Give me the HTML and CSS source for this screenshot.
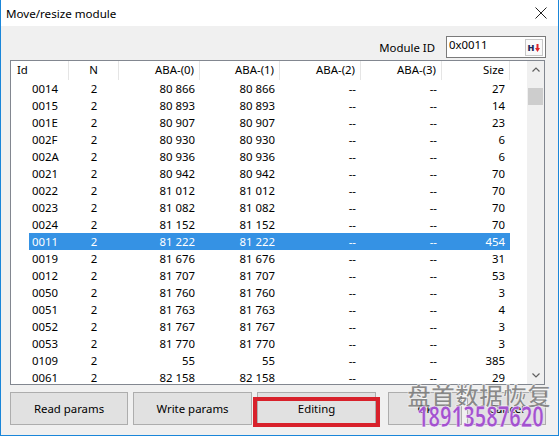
FILE: index.html
```html
<!DOCTYPE html>
<html lang="en">

<head>
    <meta charset="UTF-8">
    <title>Move/resize module</title>
    <link rel="stylesheet" href="styles.css">
</head>

<body>
    <div class="window">
        <div class="titlebar">
            <span class="title">Move/resize module</span>
            <svg class="close-icon" width="12" height="12" viewBox="0 0 12 12">
                <path d="M0.5 0.5 L11.5 11.5 M11.5 0.5 L0.5 11.5" stroke="#222" stroke-width="1" fill="none" />
            </svg>
        </div>

        <div class="toolbar">
            <label class="module-label">Module ID</label>
            <div class="module-input">
                <span class="module-value">0x0011</span>
                <span class="pick-btn">
                    <b>H</b>
                    <svg width="5" height="8" viewBox="0 0 5 8">
                        <path d="M1.5 0 H3.5 V4 H5 L2.5 8 L0 4 H1.5 Z" fill="#e0242a" />
                    </svg>
                </span>
            </div>
        </div>

        <div class="listview">
            <div class="list-main">
                <div class="list-header">
                    <div class="hcell h-id">Id</div>
                    <div class="hcell h-n">N</div>
                    <div class="hcell h-aba0">ABA-(0)</div>
                    <div class="hcell h-aba1">ABA-(1)</div>
                    <div class="hcell h-aba2">ABA-(2)</div>
                    <div class="hcell h-aba3">ABA-(3)</div>
                    <div class="hcell h-size">Size</div>
                    <div class="hcell h-fill"></div>
                </div>
                <div class="list-rows">
                    <div class="row"><span>0014</span><span>2</span><span>80 866</span><span>80 866</span><span>--</span><span>--</span><span>27</span></div>
                    <div class="row"><span>0015</span><span>2</span><span>80 893</span><span>80 893</span><span>--</span><span>--</span><span>14</span></div>
                    <div class="row"><span>001E</span><span>2</span><span>80 907</span><span>80 907</span><span>--</span><span>--</span><span>23</span></div>
                    <div class="row"><span>002F</span><span>2</span><span>80 930</span><span>80 930</span><span>--</span><span>--</span><span>6</span></div>
                    <div class="row"><span>002A</span><span>2</span><span>80 936</span><span>80 936</span><span>--</span><span>--</span><span>6</span></div>
                    <div class="row"><span>0021</span><span>2</span><span>80 942</span><span>80 942</span><span>--</span><span>--</span><span>70</span></div>
                    <div class="row"><span>0022</span><span>2</span><span>81 012</span><span>81 012</span><span>--</span><span>--</span><span>70</span></div>
                    <div class="row"><span>0023</span><span>2</span><span>81 082</span><span>81 082</span><span>--</span><span>--</span><span>70</span></div>
                    <div class="row"><span>0024</span><span>2</span><span>81 152</span><span>81 152</span><span>--</span><span>--</span><span>70</span></div>
                    <div class="row selected"><span>0011</span><span>2</span><span>81 222</span><span>81 222</span><span>--</span><span>--</span><span>454</span></div>
                    <div class="row"><span>0019</span><span>2</span><span>81 676</span><span>81 676</span><span>--</span><span>--</span><span>31</span></div>
                    <div class="row"><span>0012</span><span>2</span><span>81 707</span><span>81 707</span><span>--</span><span>--</span><span>53</span></div>
                    <div class="row"><span>0050</span><span>2</span><span>81 760</span><span>81 760</span><span>--</span><span>--</span><span>3</span></div>
                    <div class="row"><span>0051</span><span>2</span><span>81 763</span><span>81 763</span><span>--</span><span>--</span><span>4</span></div>
                    <div class="row"><span>0052</span><span>2</span><span>81 767</span><span>81 767</span><span>--</span><span>--</span><span>3</span></div>
                    <div class="row"><span>0053</span><span>2</span><span>81 770</span><span>81 770</span><span>--</span><span>--</span><span>3</span></div>
                    <div class="row"><span>0109</span><span>2</span><span>55</span><span>55</span><span>--</span><span>--</span><span>385</span></div>
                    <div class="row"><span>0061</span><span>2</span><span>82 158</span><span>82 158</span><span>--</span><span>--</span><span>29</span></div>
                </div>
            </div>
            <div class="scrollbar">
                <div class="sb-arrow">
                    <svg width="8" height="5" viewBox="0 0 8 5">
                        <path d="M0.5 4.5 L4 1 L7.5 4.5" stroke="#606060" stroke-width="1.2" fill="none" />
                    </svg>
                </div>
                <div class="sb-track">
                    <div class="sb-thumb"></div>
                </div>
                <div class="sb-arrow">
                    <svg width="8" height="5" viewBox="0 0 8 5">
                        <path d="M0.5 0.5 L4 4 L7.5 0.5" stroke="#606060" stroke-width="1.2" fill="none" />
                    </svg>
                </div>
            </div>
        </div>

        <div class="buttons">
            <button class="btn btn-read">Read params</button>
            <button class="btn btn-write">Write params</button>
            <button class="btn btn-edit">Editing</button>
            <button class="btn btn-ok">Ok</button>
            <button class="btn btn-cancel">Cancel</button>
        </div>

        <!-- annotation box round the Editing button -->
        <div class="mark-box"></div>

        <div class="watermark">
            <div class="wm-name">盘首数据恢复</div>
            <div class="wm-phone">18913587620</div>
        </div>
    </div>
</body>

</html>
```

FILE: styles.css
```css
* {
    box-sizing: border-box;
    margin: 0;
    padding: 0;
}

body {
    font-family: "Noto Sans", Arial, sans-serif;
    font-size: 11.4px;
    color: #000;
    background: #fff;
}

.window {
    position: relative;
    width: 559px;
    height: 436px;
    background-color: #f0f0f0;
    border: 1px solid #1a86d9;
    border-top: none;
    display: flex;
    flex-direction: column;
    overflow: hidden;
}

.titlebar {
    height: 26px;
    background-color: #fff;
    display: flex;
    align-items: center;
    justify-content: space-between;
    padding: 0 11px 0 5px;
}

.title {
    font-size: 11.6px;
}

.toolbar {
    height: 34px;
    display: flex;
    justify-content: flex-end;
    align-items: flex-start;
    padding: 10px 12px 0 0;
    gap: 11px;
}

.module-label {
    line-height: 22px;
    margin-top: 1px;
}

.module-input {
    width: 100px;
    height: 22px;
    background-color: #fff;
    border: 1px solid #7a7a7a;
    display: flex;
    justify-content: space-between;
    padding: 1px 2px 0 2px;
}

.module-value {
    line-height: 14px;
}

.pick-btn {
    width: 18px;
    height: 17px;
    margin-top: 1px;
    border: 1px solid #c8c8c8;
    background-color: #fafafa;
    display: flex;
    align-items: center;
    justify-content: center;
    gap: 1px;
}

.pick-btn b {
    font-size: 9px;
    font-weight: 900;
    color: #1d2a5c;
    line-height: 9px;
}

/* list view */

.listview {
    margin-left: 9px;
    width: 535px;
    height: 325px;
    background-color: #fff;
    border: 1px solid #828790;
    display: flex;
    overflow: hidden;
}

.list-main {
    width: 516px;
}

.list-header {
    display: grid;
    grid-template-columns: 58px 50px 81px 80px 81px 81px 68px 17px;
    height: 19px;
}

.hcell {
    border-right: 1px solid #e5e5e5;
    line-height: 17px;
    padding: 0 5px;
    text-align: right;
}

.h-id {
    text-align: left;
    padding-left: 6px;
}

.h-n {
    text-align: center;
}

.h-fill {
    border-right: none;
}

.row {
    display: grid;
    grid-template-columns: 40px 50px 81px 80px 81px 81px 68px;
    width: 481px;
    height: 17px;
    margin-left: 18px;
    line-height: 17px;
}

.row span {
    text-align: right;
    padding-right: 5px;
}

.row span:nth-child(1) {
    text-align: left;
    padding-left: 3px;
}

.row span:nth-child(2) {
    text-align: center;
    padding-right: 0;
}

.row.selected {
    background-color: #3592e4;
    color: #fff;
}

.scrollbar {
    width: 17px;
    background-color: #f0f0f0;
    display: flex;
    flex-direction: column;
}

.sb-arrow {
    height: 17px;
    display: flex;
    align-items: center;
    justify-content: center;
}

.sb-track {
    flex: 1;
    padding: 10px 1px 0 1px;
}

.sb-thumb {
    height: 17px;
    background-color: #cdcdcd;
}

/* buttons */

.buttons {
    display: flex;
    gap: 5px;
    margin-top: 7px;
    padding-left: 9px;
}

.btn {
    height: 33px;
    background-color: #e1e1e1;
    border: 1px solid #adadad;
    font-family: "Noto Sans", Arial, sans-serif;
    font-size: 11.4px;
    color: #000;
}

.btn-read {
    width: 118px;
}

.btn-write {
    width: 119px;
}

.btn-edit {
    width: 119px;
}

.btn-ok {
    width: 74px;
    margin-left: 7px;
}

.btn-cancel {
    width: 79px;
}

.mark-box {
    position: absolute;
    left: 252px;
    top: 397px;
    width: 127px;
    height: 30px;
    border: 4px solid #d8212b;
}

.watermark {
    position: absolute;
    left: 406px;
    top: 381px;
    pointer-events: none;
}

.wm-name {
    font-family: "Noto Sans CJK SC", sans-serif;
    font-size: 24px;
    font-weight: 700;
    line-height: 28px;
    color: rgba(120, 120, 120, 0.85);
    -webkit-text-stroke: 0.5px #fff;
}

.wm-phone {
    font-family: "Noto Sans", sans-serif;
    font-size: 28px;
    font-weight: 700;
    line-height: 24px;
    color: #a352cf;
    margin-top: -5px;
    margin-left: 10px;
    transform: scaleX(0.72);
    transform-origin: left center;
    -webkit-text-stroke: 0.5px #fff;
}
```
